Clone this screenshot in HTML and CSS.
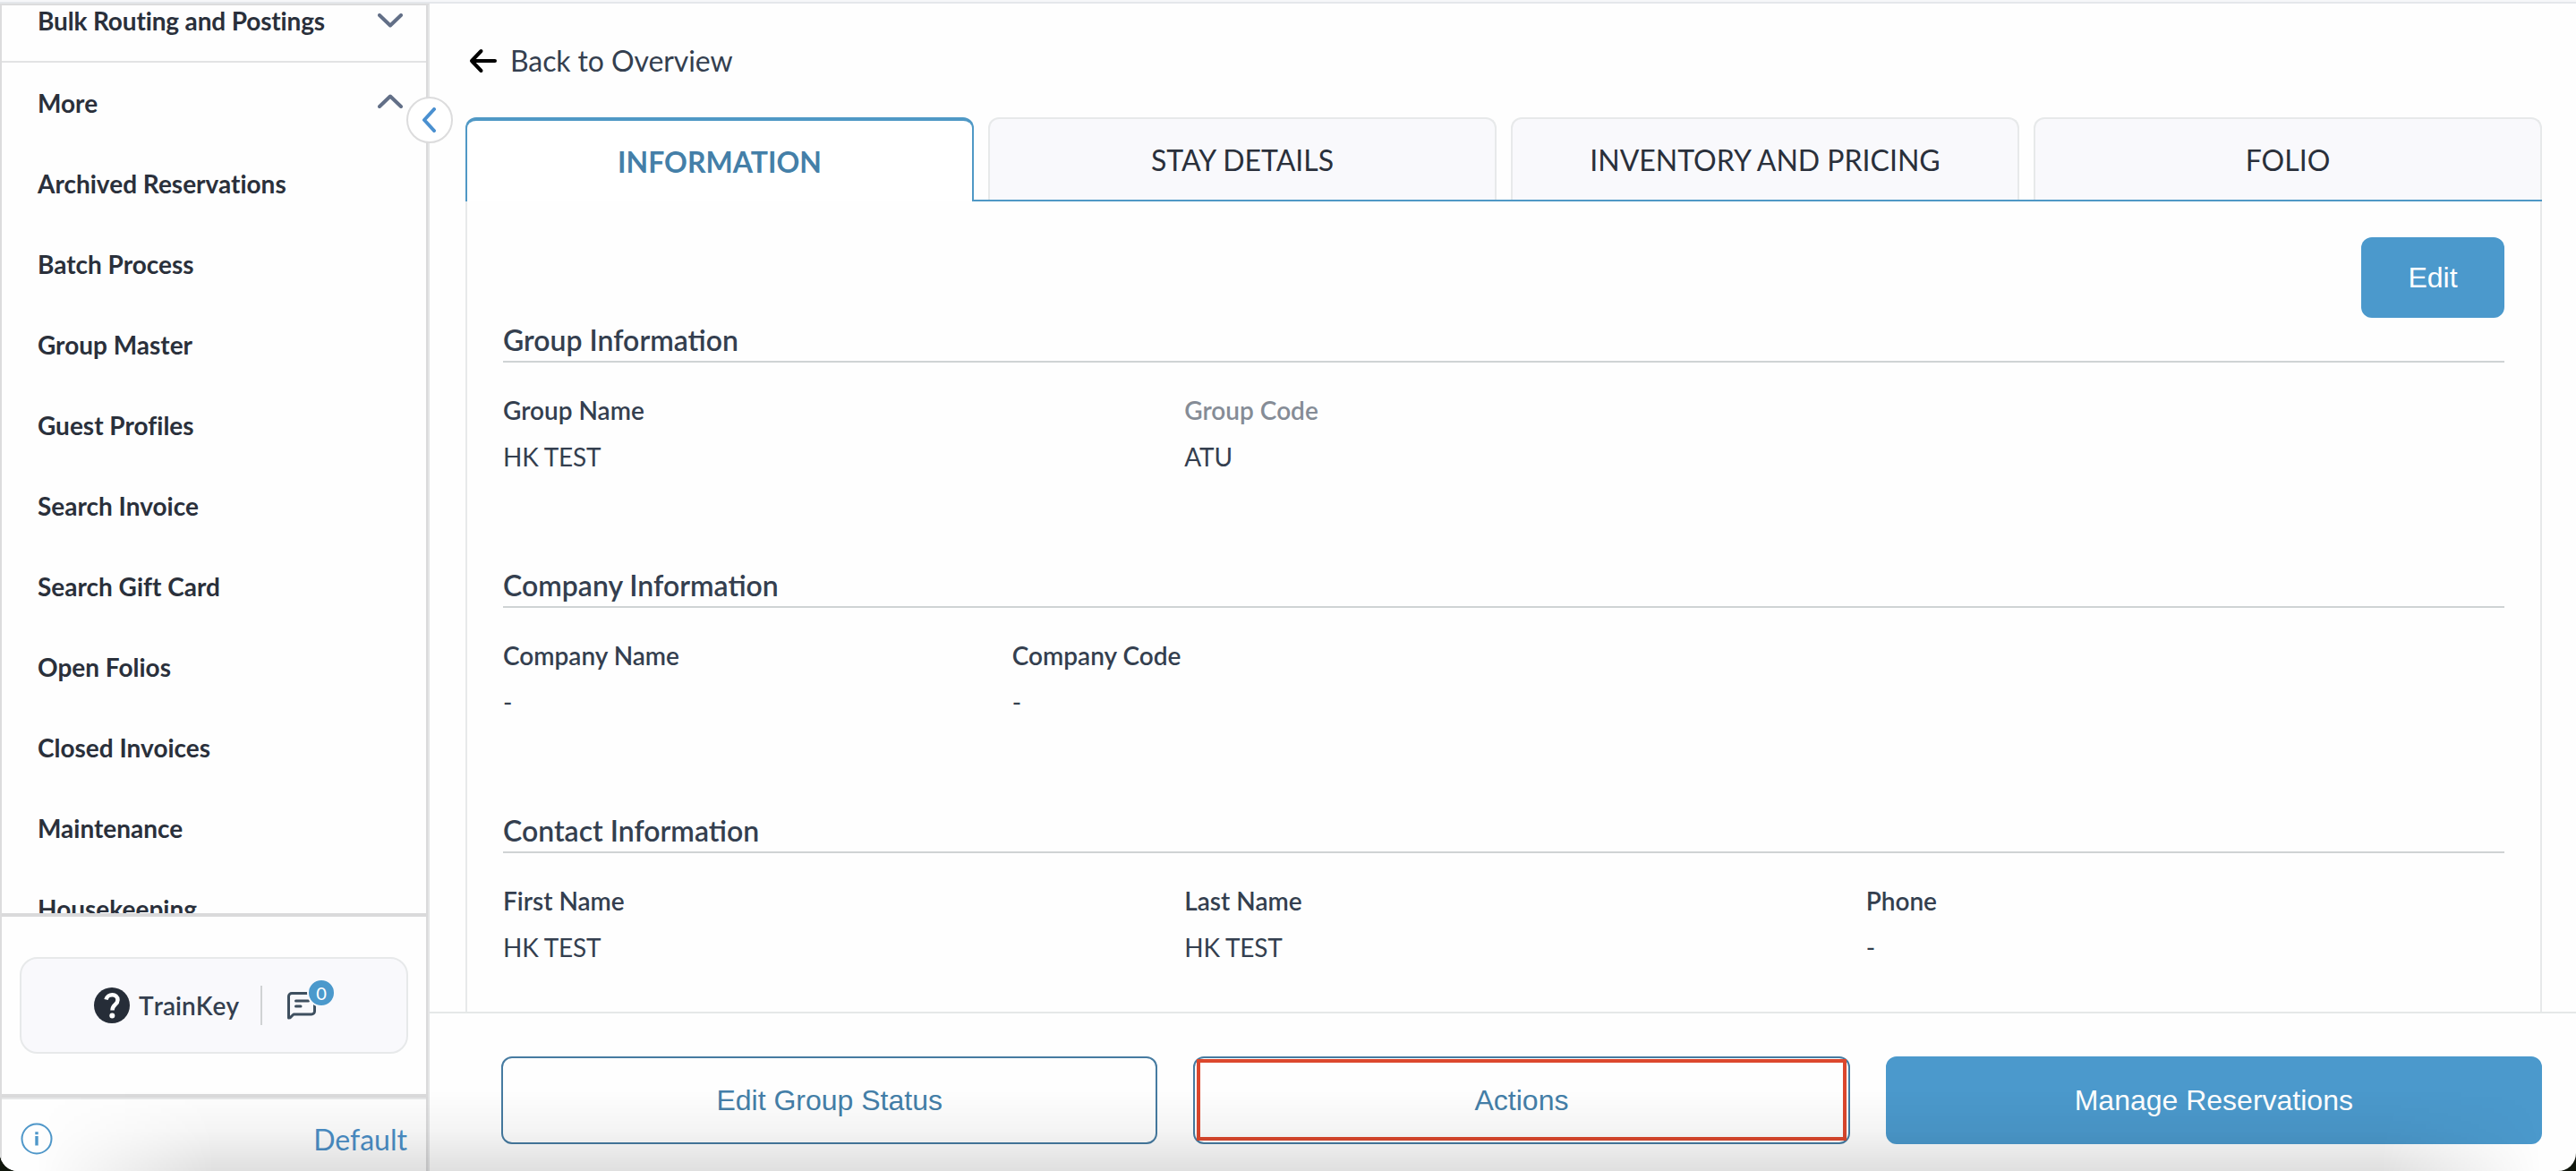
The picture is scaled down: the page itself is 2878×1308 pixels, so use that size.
FILE: index.html
```html
<!DOCTYPE html>
<html lang="en">
<head>
    <meta charset="UTF-8">
    <title>Group Details</title>
    <link rel="stylesheet" href="styles.css">
</head>
<body>
    <div class="app">
        <div class="sidebar">
            <div class="menu">
                <div class="menu-item first">
                    <span>Bulk Routing and Postings</span>
                    <svg class="chevron" viewBox="0 0 28 16"><path d="M2 2l12 11.500L26 2"/></svg>
                </div>
                <div class="menu-item more">
                    <span>More</span>
                    <svg class="chevron" viewBox="0 0 28 16"><path d="M2 14L14 2.500l12 11.500"/></svg>
                </div>
                <div class="menu-item">Archived Reservations</div>
                <div class="menu-item">Batch Process</div>
                <div class="menu-item">Group Master</div>
                <div class="menu-item">Guest Profiles</div>
                <div class="menu-item">Search Invoice</div>
                <div class="menu-item">Search Gift Card</div>
                <div class="menu-item">Open Folios</div>
                <div class="menu-item">Closed Invoices</div>
                <div class="menu-item">Maintenance</div>
                <div class="menu-item">Housekeeping</div>
            </div>
            <div class="help">
                <div class="help-box">
                    <svg class="help-icon" viewBox="0 0 40 40">
                        <circle cx="20" cy="20" r="20" fill="#262d38"/>
                        <path d="M13.500 13.500C15 6.500 26.500 6.500 26.500 14c0 5.500-6 5-6 11.500" fill="none" stroke="#fff" stroke-width="4.500" stroke-linecap="butt"/>
                        <circle cx="20.300" cy="31.500" r="3" fill="#fff"/>
                    </svg>
                    <span class="help-name">TrainKey</span>
                    <span class="divider"></span>
                    <div class="chat">
                        <svg viewBox="0 0 32 32">
                            <path d="M1.500 30V6a3.500 3.500 0 0 1 3.500-3.500h22A3.500 3.500 0 0 1 30.500 6v16.500a3.500 3.500 0 0 1-3.500 3.500H7L3 29.800z"/>
                            <path d="M9.500 11h14M9.500 17h5.500"/>
                        </svg>
                        <span class="badge">0</span>
                    </div>
                </div>
            </div>
            <div class="status">
                <svg class="info" viewBox="0 0 36 36">
                    <circle cx="18" cy="18" r="16.500" fill="none" stroke="#4f97c9" stroke-width="2"/>
                    <path d="M18 15v10.500M18 10.300v3" stroke="#4f97c9" stroke-width="3.400"/>
                </svg>
                <span>Default</span>
            </div>
            <button class="collapse">
                <svg viewBox="0 0 16 28"><path d="M14 2L3 14l11 12"/></svg>
            </button>
        </div>

        <div class="content">
            <div class="scroll">
                <div class="back">
                    <svg viewBox="0 0 32 28"><path d="M13.500 3L3 14l10.500 11M3 14h26"/></svg>
                    <span>Back to Overview</span>
                </div>
                <div class="tabs">
                    <div class="tab active">INFORMATION</div>
                    <div class="tab">STAY DETAILS</div>
                    <div class="tab">INVENTORY AND PRICING</div>
                    <div class="tab">FOLIO</div>
                </div>
                <div class="panel">
                    <div class="toolbar">
                        <button class="btn-edit">Edit</button>
                    </div>
                    <div class="section">
                        <h2>Group Information</h2>
                        <div class="fields">
                            <div class="field"><label>Group Name</label><p>HK TEST</p></div>
                            <div class="field"><label class="muted">Group Code</label><p>ATU</p></div>
                        </div>
                    </div>
                    <div class="section">
                        <h2>Company Information</h2>
                        <div class="fields four">
                            <div class="field"><label>Company Name</label><p>-</p></div>
                            <div class="field"><label>Company Code</label><p>-</p></div>
                        </div>
                    </div>
                    <div class="section">
                        <h2>Contact Information</h2>
                        <div class="fields">
                            <div class="field"><label>First Name</label><p>HK TEST</p></div>
                            <div class="field"><label>Last Name</label><p>HK TEST</p></div>
                            <div class="field"><label>Phone</label><p>-</p></div>
                        </div>
                    </div>
                </div>
            </div>
            <div class="footer">
                <button class="btn">Edit Group Status</button>
                <button class="btn marked">Actions</button>
                <button class="btn primary">Manage Reservations</button>
            </div>
        </div>
        <div class="shade"></div>
    </div>
</body>
</html>
```

FILE: styles.css
```css
* {
    box-sizing: border-box;
}
body, html {
    height: 100%;
    margin: 0;
    background-color: #10160c;
    font-family: Lato, sans-serif;
    color: #343f4f;
}
.app {
    position: relative;
    display: flex;
    height: 100%;
    padding-top: 4px;
    background: linear-gradient(#f6f7f9 2px, #e4e7eb 2px, #e4e7eb 4px, #fefefe 4px);
    border-radius: 0 0 20px 20px;
    overflow: hidden;
}
svg {
    display: block;
    fill: none;
    stroke-linecap: round;
    stroke-linejoin: round;
}

/* Sidebar */
.sidebar {
    position: relative;
    display: flex;
    flex-direction: column;
    width: 480px;
    border-left: 2px solid #dcdcdd;
    border-top: 2px solid #dcdcdd;
    border-right: 2px solid #e4e5e6;
    box-shadow: inset -2px 0 #dadadb;
    background-color: #fefefe;
}
.menu {
    height: 1014px;
    margin-right: 2px;
    overflow: hidden;
}
.menu-item {
    display: flex;
    align-items: center;
    justify-content: space-between;
    height: 90px;
    padding: 0 26px 0 40px;
    font-size: 28px;
    font-weight: 700;
    font-variant-ligatures: none;
    color: #2a303b;
    white-space: nowrap;
}
.menu-item.first {
    height: 64px;
    padding-bottom: 28px;
    border-bottom: 2px solid #e2e3e4;
    letter-spacing: -0.15px;
}
.menu-item.more .chevron {
    margin-top: -4px;
}
.chevron {
    width: 28px;
    height: 16px;
    stroke: #626f87;
    stroke-width: 4;
}
.help {
    height: 202px;
    margin-right: 2px;
    padding: 45px 20px 0;
    border-top: 4px solid #dadadb;
}
.help-box {
    display: flex;
    align-items: center;
    width: 434px;
    height: 108px;
    padding-left: 81px;
    border: 2px solid #e7e9ea;
    border-radius: 20px;
    background-color: #f9f9fc;
}
.help-icon {
    width: 40px;
    height: 40px;
}
.help-name {
    width: 136px;
    margin-left: 10px;
    font-size: 28px;
    font-weight: 600;
    font-kerning: none;
}
.divider {
    width: 2px;
    height: 44px;
    background-color: #d0d2d4;
}
.chat {
    position: relative;
    margin-left: 28px;
    stroke: #3e4f5f;
    stroke-width: 3;
}
.chat svg {
    width: 32px;
    height: 32px;
}
.badge {
    position: absolute;
    left: 22px;
    top: -14px;
    width: 32px;
    height: 32px;
    border: 2px solid #f9f9fc;
    border-radius: 50%;
    background-color: #4b99cc;
    color: #fff;
    font-size: 20px;
    line-height: 29px;
    text-align: center;
}
.status {
    display: flex;
    flex: 1;
    align-items: center;
    justify-content: space-between;
    margin-right: 2px;
    padding: 10px 21px 0 21px;
    border-top: 4px solid #dadadb;
    box-shadow: inset 0 2px #e6e7e8;
    font-size: 32px;
    color: #4b8fc7;
}
.info {
    width: 36px;
    height: 36px;
    stroke-linecap: butt;
}
.collapse {
    position: absolute;
    right: -28px;
    top: 102px;
    z-index: 2;
    width: 52px;
    height: 52px;
    padding: 0 0 0 15px;
    border: 2px solid #dcdcdd;
    border-radius: 50%;
    background-color: #fff;
}
.collapse svg {
    width: 16px;
    height: 28px;
    stroke: #4a90d0;
    stroke-width: 4;
}

/* Content */
.content {
    display: flex;
    flex: 1;
    flex-direction: column;
}
.scroll {
    display: flex;
    flex-direction: column;
    height: 1126px;
    padding: 44px 38px 0 40px;
    overflow: hidden;
}
.back {
    display: flex;
    align-items: center;
    gap: 14px;
    height: 40px;
    margin-bottom: 44px;
    padding-left: 4px;
    font-size: 32px;
    letter-spacing: -0.1px;
}
.back svg {
    width: 32px;
    height: 28px;
    stroke: #000;
    stroke-width: 4;
}
.tabs {
    display: grid;
    grid-template-columns: repeat(4, 1fr);
    column-gap: 16px;
    height: 94px;
    background: linear-gradient(#4f98c5, #4f98c5) right bottom / 1754px 2px no-repeat;
}
.tab {
    height: 92px;
    border: 2px solid #e7e9ea;
    border-bottom: none;
    border-radius: 12px 12px 0 0;
    background-color: #f9f9fc;
    color: #2a303b;
    font-size: 32px;
    line-height: 92px;
    text-align: center;
}
.tab.active {
    height: 94px;
    border-color: #4f98c5;
    border-top-width: 4px;
    background-color: #fff;
    color: #447fa8;
    font-weight: 700;
}
.panel {
    flex: 1;
    padding: 40px 40px 0;
    border: 2px solid #e7e9ea;
    border-top: none;
    border-bottom: none;
}
.toolbar {
    display: flex;
    justify-content: flex-end;
    height: 90px;
}
.btn-edit {
    width: 160px;
    border: none;
    border-radius: 12px;
    background-color: #4b99cc;
    color: #fff;
    font-family: "Liberation Sans", Arial, sans-serif;
    font-size: 32px;
}
.section {
    height: 274px;
}
.section h2 {
    height: 50px;
    margin: 0;
    padding-top: 4px;
    border-bottom: 2px solid #cfd3d4;
    font-size: 32px;
    font-weight: 600;
    line-height: 42px;
}
.fields {
    display: grid;
    grid-template-columns: repeat(3, 1fr);
    column-gap: 48px;
    padding-top: 36px;
}
.fields.four {
    grid-template-columns: repeat(4, 1fr);
    column-gap: 39px;
}
.field label, .field p {
    display: block;
    margin: 0 0 18px;
    font-size: 28px;
    line-height: 34px;
}
.field label {
    font-weight: 600;
}
.field p {
    letter-spacing: -0.2px;
}
.field .muted {
    color: #858c96;
}

/* Footer buttons */
.footer {
    display: grid;
    flex: 1;
    grid-template-columns: repeat(3, 1fr);
    column-gap: 40px;
    padding: 48px 38px 30px 80px;
    border-top: 2px solid #e5e8e8;
}
.btn {
    position: relative;
    border: 2px solid #467ba1;
    border-radius: 12px;
    background-color: transparent;
    color: #447fa8;
    font-family: "Liberation Sans", Arial, sans-serif;
    font-size: 32px;
}
.btn.primary {
    border-color: #4b99cc;
    background-color: #4b99cc;
    color: #fff;
}
.marked::after {
    content: "";
    position: absolute;
    left: 2px;
    right: 2px;
    top: 1px;
    bottom: 2px;
    border: 4px solid #dc472d;
}
.shade {
    position: absolute;
    left: 0;
    right: 0;
    bottom: 0;
    height: 90px;
    background: linear-gradient(rgba(0, 0, 0, 0), rgba(0, 0, 0, 0.04) 50%, rgba(0, 0, 0, 0.12));
    mask-image: linear-gradient(to right, transparent 40px, #000 240px, #000 2660px, transparent 2840px);
    pointer-events: none;
}
```
